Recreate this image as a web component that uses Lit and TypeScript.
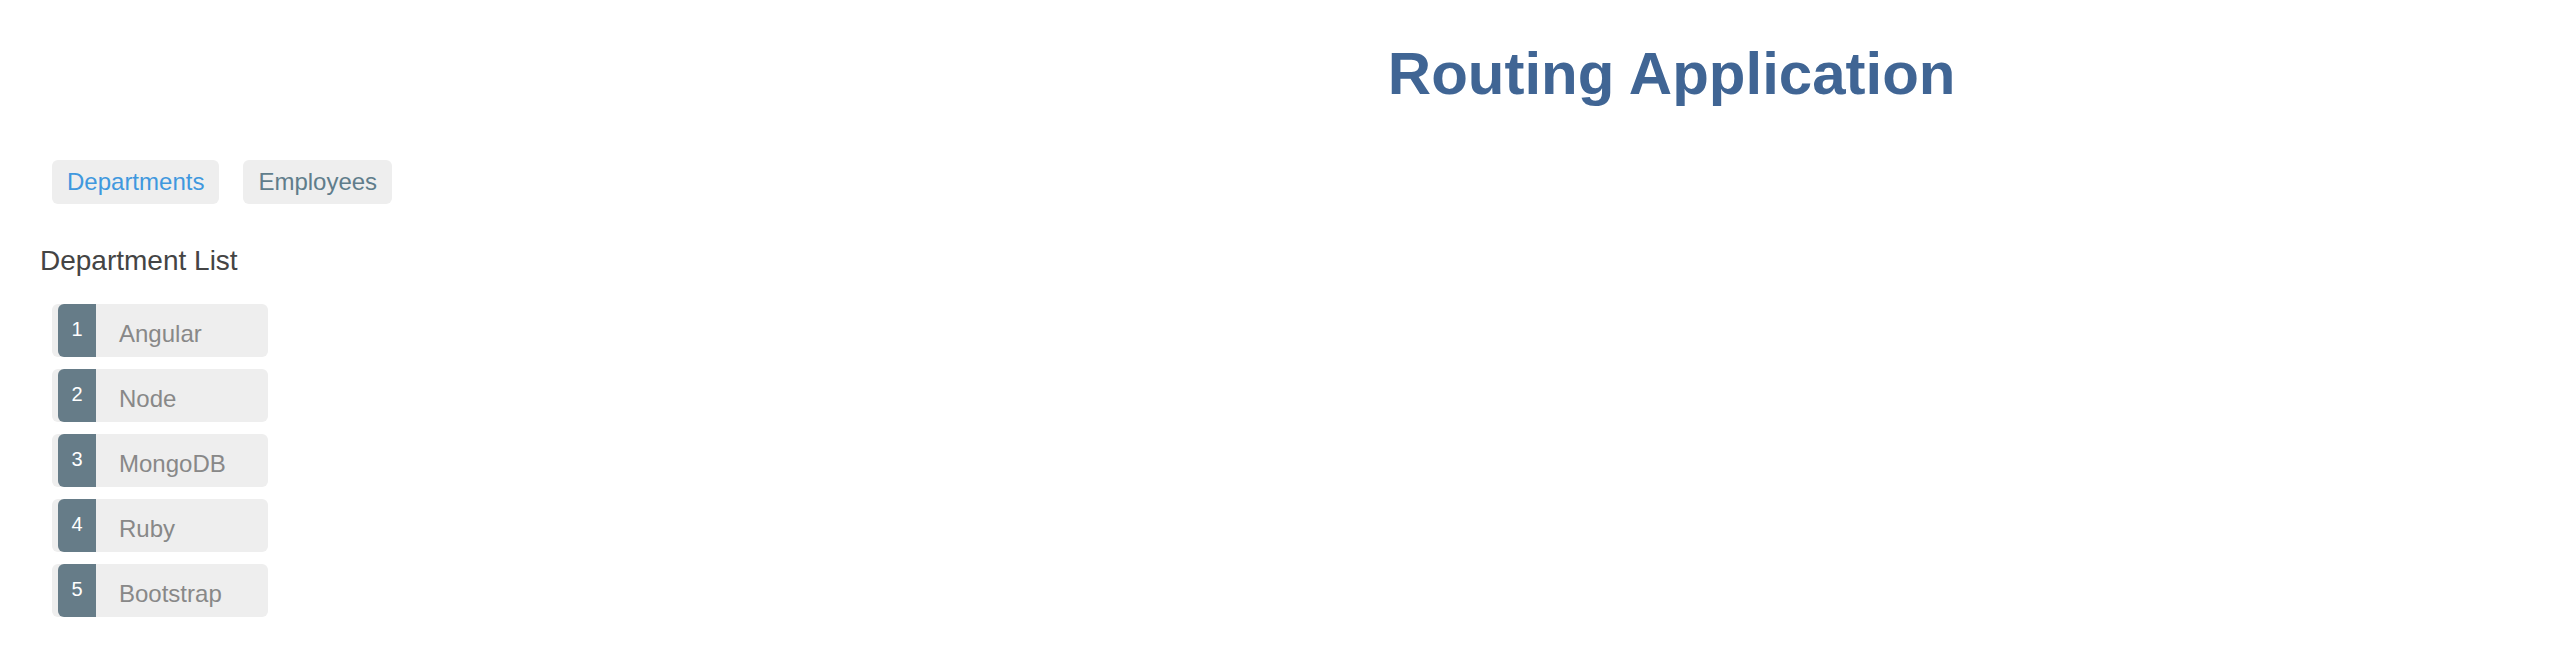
import { LitElement, html, css } from "lit";
import { customElement, state } from "lit/decorators.js";
import { classMap } from "lit/directives/class-map.js";

interface Department {
  id: number;
  name: string;
}

@customElement("app-root")
export class AppRoot extends LitElement {
  static styles = css`
    :host {
      display: block;
      padding: 39px 0 0 40px;
      box-sizing: border-box;
      background: #fff;
      font-family: Arial, "Liberation Sans", Helvetica, sans-serif;
      overflow: hidden;
    }
    .title {
      margin: 0;
      padding-left: 29.6%;
      text-align: center;
      font-size: 60px;
      line-height: 70px;
      color: #406594;
    }
    .nav {
      display: flex;
      gap: 24px;
      margin: 51px 0 0 12px;
    }
    .link {
      padding: 8px 15px;
      border-radius: 6px;
      background: #eee;
      color: #607d8b;
      font-size: 24px;
      line-height: 28px;
      text-decoration: none;
    }
    .link.active {
      color: #3f98de;
    }
    .heading {
      margin: 41px 0 0;
      font-size: 28px;
      line-height: 32px;
      font-weight: 400;
      color: #444;
    }
    .list {
      display: flex;
      flex-direction: column;
      gap: 12px;
      width: 216px;
      margin: 27px 0 0 12px;
      padding: 0;
      list-style: none;
    }
    .item {
      display: flex;
      gap: 23px;
      height: 53px;
      padding-left: 6px;
      border-radius: 6px;
      background: #eee;
      color: #888;
      font-size: 24px;
      line-height: 60px;
      cursor: pointer;
    }
    .badge {
      width: 38px;
      border-radius: 6px 0 0 6px;
      background: #667c88;
      color: #fff;
      font-size: 20px;
      line-height: 51px;
      text-align: center;
    }
  `;

  @state() private active = "Departments";

  private links = ["Departments", "Employees"];

  private departments: Department[] = [
    { id: 1, name: "Angular" },
    { id: 2, name: "Node" },
    { id: 3, name: "MongoDB" },
    { id: 4, name: "Ruby" },
    { id: 5, name: "Bootstrap" },
  ];

  private select(event: Event, name: string) {
    event.preventDefault();
    this.active = name;
  }

  render() {
    return html`
      <h1 class="title">Routing Application</h1>
      <nav class="nav">
        ${this.links.map(
          (name) => html`<a
            class=${classMap({ link: true, active: name === this.active })}
            href="#${name.toLowerCase()}"
            @click=${(e: Event) => this.select(e, name)}
            >${name}</a
          >`
        )}
      </nav>
      <h3 class="heading">Department List</h3>
      <ul class="list">
        ${this.departments.map(
          (d) => html`<li class="item">
            <span class="badge">${d.id}</span><span>${d.name}</span>
          </li>`
        )}
      </ul>
    `;
  }
}
